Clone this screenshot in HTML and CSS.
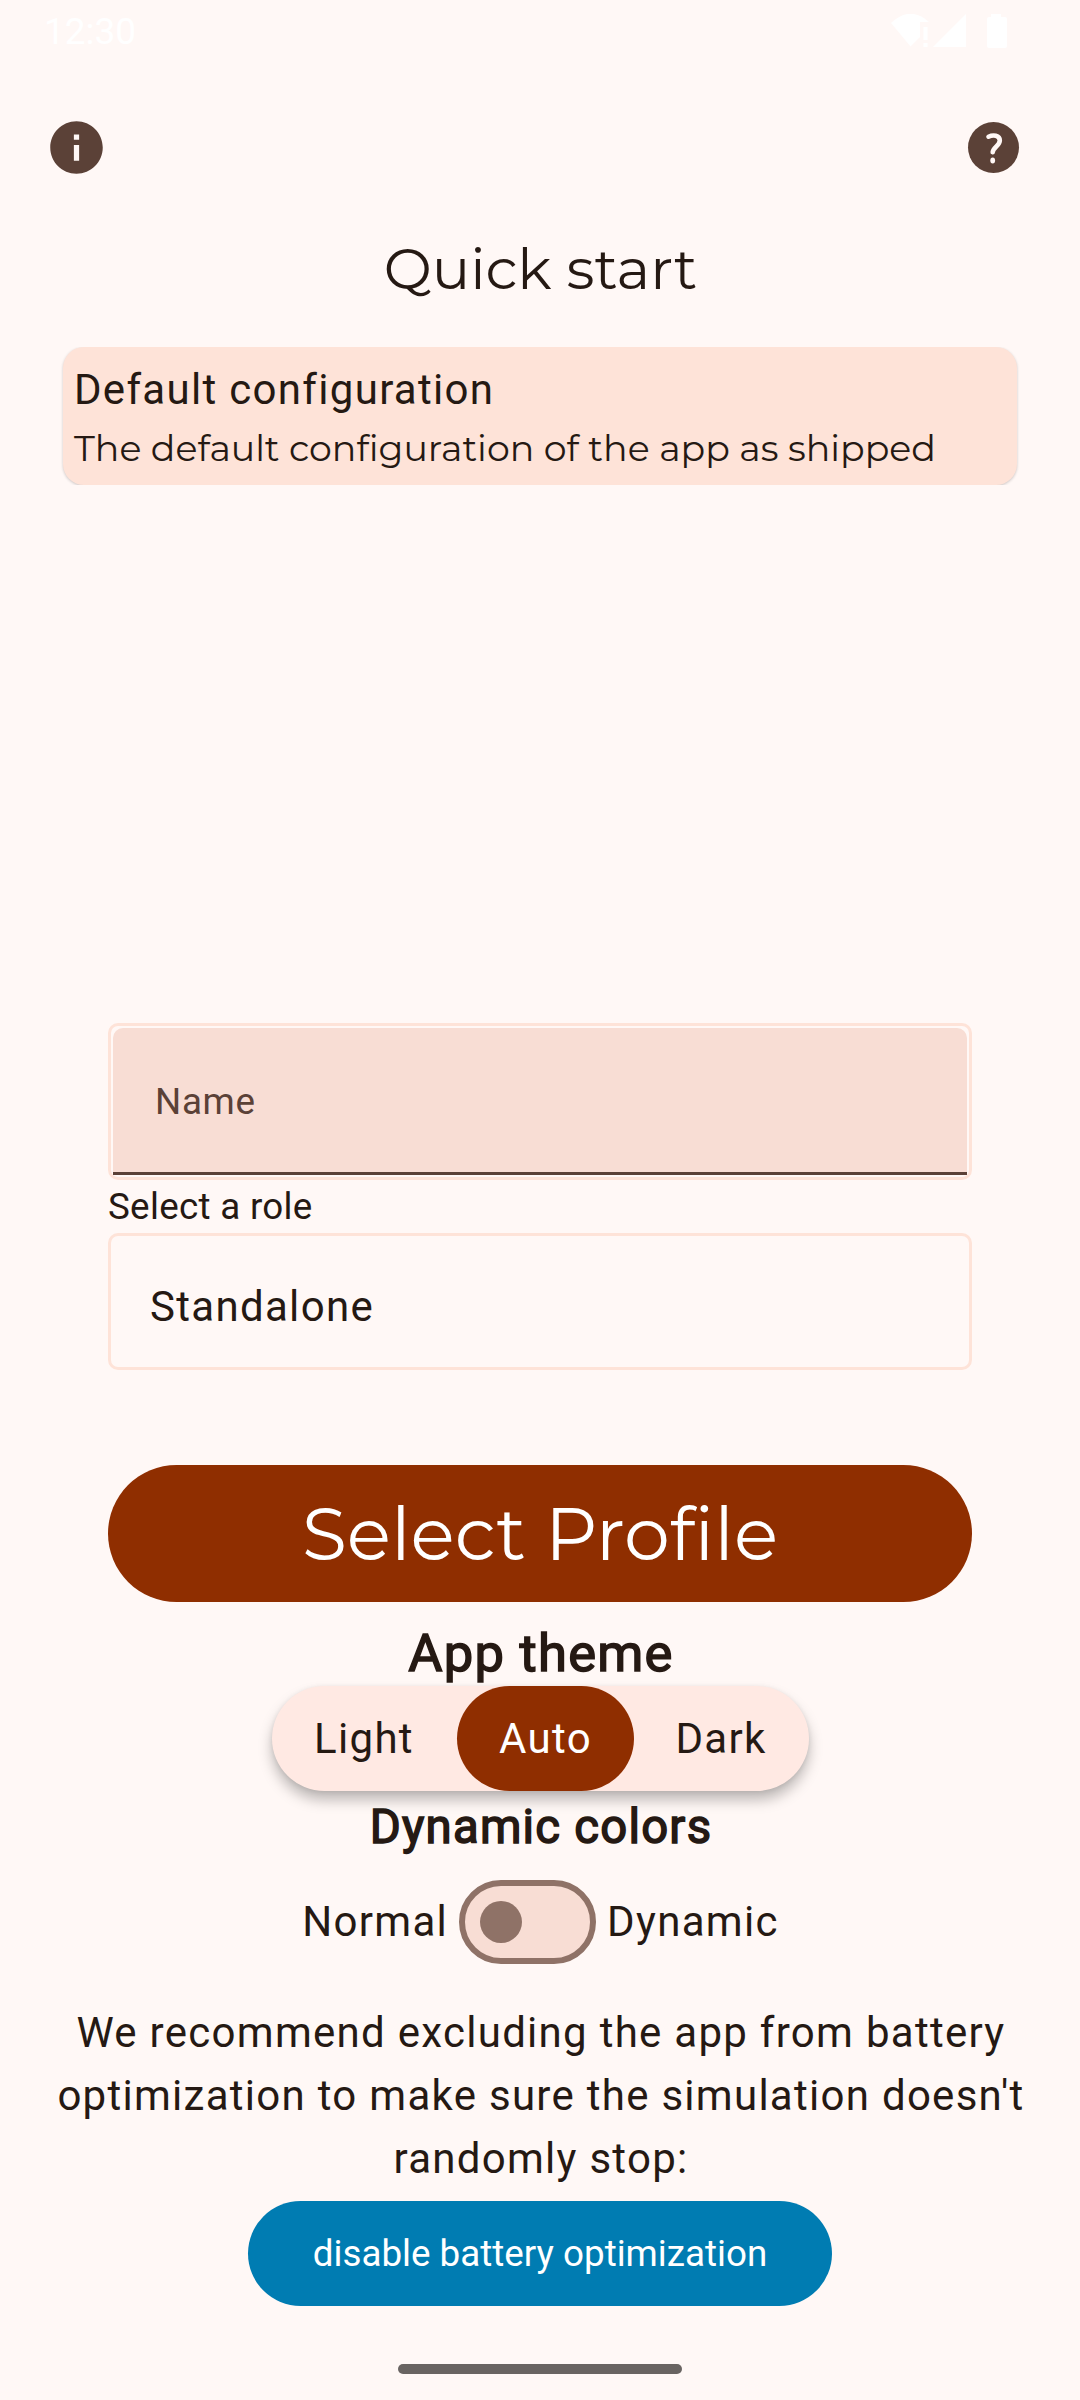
FILE: index.html
```html
<!DOCTYPE html>
<html lang="en">
<head>
<meta charset="utf-8">
<title>Quick start</title>
<link rel="stylesheet" href="styles.css">
</head>
<body>
<div class="screen">
  <header class="status">
    <span class="clock">12:30</span>
    <svg class="status-icons" width="116" height="36" viewBox="0 0 116 36" fill="#fff">
      <path d="M0 9Q19 -9 38 8H29V23L19.500 32.500Z"/>
      <path d="M32.500 13h4v13h-4zM32.500 29h4v4h-4z"/>
      <path d="M42 33L75 0V33Z"/>
      <path d="M96 3h4V0h10v3h4q2 0 2 2v27q0 2-2 2H98q-2 0-2-2V5q0-2 2-2z"/>
    </svg>
  </header>

  <nav class="actions">
    <svg class="icon" width="63" height="63" viewBox="0 0 24 24"><path fill="#5b4137" d="M12 2C6.480 2 2 6.480 2 12s4.480 10 10 10 10-4.480 10-10S17.520 2 12 2zm1 15h-2v-6h2v6zm0-8h-2V7h2v2z"/></svg>
    <svg class="icon" width="63" height="63" viewBox="0 0 63 63" fill="none">
      <circle cx="31.500" cy="31.500" r="25.500" fill="#5b4137"/>
      <path d="M26.500 20.700C31 18.500 37.800 19 37.800 24.500C37.800 29.500 31.300 31.500 30.700 36.200" stroke="#fff8f6" stroke-width="4.600" stroke-linecap="round"/>
      <ellipse cx="30.700" cy="44.500" rx="2.400" ry="3" fill="#fff8f6"/>
    </svg>
  </nav>

  <h1 class="title">Quick start</h1>

  <section class="presets">
    <div class="card">
      <div class="card-name">Default configuration</div>
      <div class="card-desc">The default configuration of the app as shipped</div>
    </div>
  </section>

  <section class="form">
    <div class="outline"><div class="name-input">Name</div></div>
    <div class="role-label">Select a role</div>
    <div class="outline role">Standalone</div>
    <button class="primary">Select Profile</button>
  </section>

  <h2 class="heading theme-heading">App theme</h2>
  <div class="segments">
    <span class="segment light">Light</span><span class="segment auto">Auto</span><span class="segment dark">Dark</span>
  </div>
  <h2 class="heading colors-heading">Dynamic colors</h2>
  <div class="colors">
    <span>Normal</span><span class="switch"><span class="thumb"></span></span><span>Dynamic</span>
  </div>

  <p class="notice">We recommend excluding the app from battery<br>optimization to make sure the simulation doesn't<br>randomly stop:</p>
  <button class="battery">disable battery optimization</button>
  <div class="handle"></div>
</div>
</body>
</html>
```

FILE: styles.css
```css
* { box-sizing: border-box; }
body { margin: 0; background: #fff8f6; }
.screen {
  width: 1080px; height: 2400px; overflow: hidden;
  display: flex; flex-direction: column; align-items: center;
  background: #fff8f6; color: #251913;
  font: 400 42px/50px Roboto, sans-serif; letter-spacing: 1.31px;
}
button { border: 0; padding: 0; font: inherit; color: #fff; letter-spacing: inherit; }
h1, h2, p { margin: 0; font-weight: 400; }

.status { width: 1080px; height: 63px; padding: 14px 73px 0 44px; display: flex; justify-content: space-between; color: #fff; }
.clock { font-size: 37px; line-height: 35px; letter-spacing: 0; }
.status-icons { display: block; }

.actions { width: 1080px; height: 116px; padding: 53px 55px 0 45px; display: flex; justify-content: space-between; }
.icon { display: block; }

.title { margin-top: 48px; height: 84px; padding-left: 1px; font: 400 57.200px/84px Montserrat, Lato, sans-serif; letter-spacing: 0; }

.presets { width: 1000px; height: 138px; margin-top: 36px; padding: 0 23px; overflow: hidden; }
.card { height: 138px; padding: 18px 11px 0; border-radius: 21px; background: #fee3d8; box-shadow: 0 1px 3px rgba(0,0,0,.2); }
.card-name { line-height: 50px; }
.card-desc { margin-top: 8px; font: 400 36.350px/50px Montserrat, Lato, sans-serif; letter-spacing: 0; white-space: nowrap; }

.form { width: 864px; margin-top: 538px; display: flex; flex-direction: column; }
.outline { border: 3px solid #fee3d8; border-radius: 10px; padding: 2px; height: 157px; }
.name-input { height: 147px; padding-left: 42px; border-radius: 10px 10px 0 0; background: #f8ddd4; border-bottom: 3px solid #5b4137; color: #5b4137; font-size: 36.750px; line-height: 147px; letter-spacing: .66px; }
.role-label { height: 53px; line-height: 54px; font-size: 36.750px; letter-spacing: .3px; }
.outline.role { height: 137px; padding: 0 0 0 39px; line-height: 141px; }
.primary { height: 137px; margin-top: 95px; border-radius: 69px; background: #8f2e00; font: 400 73px/137px Montserrat, Lato, sans-serif; letter-spacing: 0; }

.heading { -webkit-text-stroke: 1.500px #251913; }
.theme-heading { height: 84px; line-height: 102px; font-size: 52.500px; letter-spacing: 1.25px; padding-left: 2px; }
.segments { width: 537px; height: 105px; display: flex; border-radius: 53px; background: #ffe9e3; box-shadow: 0 9px 14px rgba(0,0,0,.26), 0 1px 5px rgba(0,0,0,.08); line-height: 105px; text-align: center; }
.light { width: 185px; }
.auto { width: 177px; padding-left: 1px; border-radius: 53px; background: #8f2e00; color: #fff; }
.dark { width: 175px; }
.colors-heading { height: 89px; line-height: 72px; font-size: 47.250px; letter-spacing: 1.25px; padding-left: 2px; }
.colors { height: 84px; display: flex; align-items: center; gap: 11px; line-height: 52px; padding-left: 1px; }
.switch { width: 137px; height: 84px; padding: 15px; border: 6px solid #8f7267; border-radius: 42px; background: #f8ddd4; }
.thumb { display: block; width: 42px; height: 42px; border-radius: 50%; background: #8f7267; }

.notice { margin-top: 37px; padding-left: 2px; line-height: 63px; letter-spacing: 1.28px; text-align: center; white-space: nowrap; }
.battery { width: 584px; height: 105px; margin-top: 11px; border-radius: 53px; background: #007cb2; font-size: 36.750px; line-height: 105px; letter-spacing: 0; }
.handle { width: 284px; height: 10px; margin-top: 58px; border-radius: 5px; background: #696462; }
```
